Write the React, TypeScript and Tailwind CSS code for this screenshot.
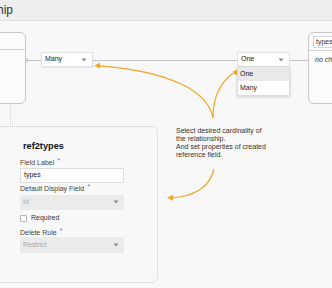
import React from "react";

const font = { fontFamily: '"Liberation Sans", Arial, sans-serif' };

function Caret({ className = "" }: { className?: string }) {
  return (
    <svg width="6" height="4" viewBox="0 0 6 4" className={className}>
      <path d="M0.5 0.5 L5.5 0.5 L3 3.5 Z" fill="#8a8a8a" />
    </svg>
  );
}

function Req() {
  return <span className="text-[#3b82f6] ml-[3px] relative -top-[2px] text-[7px]">*</span>;
}

export default function App() {
  return (
    <div className="w-[332px] h-[288px] overflow-hidden bg-[#f8f8f8] flex flex-col" style={font}>
      <div className="h-[21px] shrink-0 bg-[#eeeeee] border-b border-[#dedede] flex items-center">
        <span className="text-[12px] text-[#333] -ml-[53px] whitespace-nowrap leading-none">Relationship</span>
      </div>
      <div className="relative flex-1">
        <svg className="absolute inset-0" width="332" height="267" viewBox="0 0 332 267">
          <g stroke="#c4c4c4" strokeWidth="1" fill="none">
            <line x1="25" y1="39.5" x2="41" y2="39.5" />
            <line x1="93" y1="39.5" x2="237" y2="39.5" />
            <line x1="290" y1="39.5" x2="308" y2="39.5" />
            <line x1="10.5" y1="83" x2="10.5" y2="105" strokeDasharray="1 1.5" />
            <path d="M25 36 L28.5 39.5 L25 43" />
          </g>
          <g stroke="#f5a623" strokeWidth="1.2" fill="none">
            <path d="M213 97 C208 70 170 50 98 44.8" />
            <path d="M213 97 C213 76 221 60 235 51" />
            <path d="M214 148 C210 166 194 176 171 176.8" />
          </g>
          <g fill="#f5a623">
            <polygon points="94,44.7 100,41.8 100,47.6" />
            <polygon points="238.5,48.5 232.5,50.5 236.5,54.5" />
            <polygon points="167,176.8 173,173.8 173,179.8" />
          </g>
        </svg>

        {/* left table node */}
        <div className="absolute left-[-60px] top-[11px] w-[86px] h-[72px] rounded-[6px] border border-[#c8c8c8] bg-[#fbfbfb]">
          <div className="h-[17px] border-b border-[#d0d0d0]" />
        </div>

        {/* right table node */}
        <div className="absolute left-[308px] top-[11px] w-[60px] h-[72px] rounded-[6px] border border-[#c8c8c8] bg-[#fbfbfb] flex flex-col">
          <div className="h-[18px] border-b border-[#d0d0d0] pl-[4px] pt-[3px]">
            <div className="h-[12px] border border-[#d6d6d6] bg-white text-[7px] leading-[10px] pl-[2px] text-[#333]">types</div>
          </div>
          <div className="pl-[6px] pt-[4px] text-[7px] italic text-[#333] whitespace-nowrap">no changes</div>
        </div>

        {/* Many select */}
        <div className="absolute left-[41px] top-[31px] w-[52px] h-[15px] bg-white border border-[#e2e2e2] shadow-[0_1px_1px_rgba(0,0,0,0.05)] flex items-center justify-between pl-[3px] pr-[5px] text-[7px] text-[#222]">
          <span>Many</span>
          <Caret />
        </div>

        {/* One select with dropdown */}
        <div className="absolute left-[237px] top-[31px] w-[53px]">
          <div className="h-[15px] bg-white border border-[#e2e2e2] flex items-center justify-between pl-[3px] pr-[5px] text-[7px] text-[#222]">
            <span>One</span>
            <Caret />
          </div>
          <div className="bg-white border border-[#dcdcdc] border-t-0 shadow-[0_1px_3px_rgba(0,0,0,0.18)] text-[7px] text-[#222]">
            <div className="h-[14px] bg-[#e9e9e9] flex items-center pl-[2px]">One</div>
            <div className="h-[14px] flex items-center pl-[2px]">Many</div>
          </div>
        </div>

        {/* Note */}
        <div className="absolute left-[176px] top-[105.5px] text-[7px] leading-[8.33px] text-[#333] whitespace-nowrap">
          <div>Select desired cardinality of</div>
          <div>the relationship.</div>
          <div>And set properties of created</div>
          <div>reference field.</div>
        </div>

        {/* field panel */}
        <div className="absolute left-[-20px] top-[105px] w-[178px] h-[157px] rounded-[6px] border border-dotted border-[#c8c8c8] pl-[39px] pt-[14px] text-[7px] text-[#333]">
          <div className="ml-[3px] text-[9.2px] font-bold leading-[11px] text-[#111]">ref2types</div>
          <div className="mt-[5.5px] leading-[9px] text-[#444]">
            Field Label<Req />
          </div>
          <div className="mt-[1px] w-[104px] h-[15px] bg-white border border-[#dedede] flex items-center pl-[3px] text-[#222]">types</div>
          <div className="mt-[1px] leading-[9px] text-[#444]">
            Default Display Field<Req />
          </div>
          <div className="mt-[2px] w-[104px] h-[15px] bg-[#ebebeb] rounded-[1px] flex items-center justify-between pl-[3px] pr-[5px] text-[#a8a8a8]">
            <span>Id</span>
            <Caret />
          </div>
          <div className="mt-[4.5px] h-[9px] flex items-center gap-[4px] text-[#333]">
            <div className="w-[7px] h-[7px] border border-[#b5b5b5] rounded-[1px] bg-white" />
            <span>Required</span>
          </div>
          <div className="mt-[4.5px] leading-[9px] text-[#444]">
            Delete Rule<Req />
          </div>
          <div className="mt-[0.5px] w-[104px] h-[16px] bg-[#ebebeb] rounded-[1px] flex items-center justify-between pl-[3px] pr-[5px] text-[#a8a8a8]">
            <span>Restrict</span>
            <Caret />
          </div>
        </div>
      </div>
    </div>
  );
}
